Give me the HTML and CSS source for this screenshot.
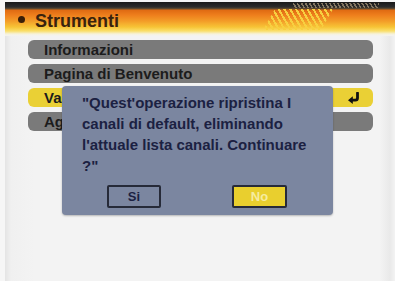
FILE: index.html
```html
<!DOCTYPE html>
<html lang="it">
<head>
<meta charset="utf-8">
<title>Strumenti</title>
<link rel="stylesheet" href="styles.css">
</head>
<body>
<div class="frame">
  <header class="header">
    <span class="dot"></span>
    <h1 class="title">Strumenti</h1>
    <span class="hatch-dark"></span>
    <span class="hatch-yellow"></span>
  </header>
  <ul class="menu">
    <li class="row">Informazioni</li>
    <li class="row">Pagina di Benvenuto</li>
    <li class="row row-active"><span class="row-label">Va</span>
      <svg class="enter" width="14" height="12" viewBox="0 0 14 12" aria-hidden="true">
        <path d="M10.5 1 V6 Q10.5 8.2 8.3 8.2 H5" fill="none" stroke="#111" stroke-width="2.8" stroke-linecap="round"/>
        <polygon points="1,8.2 5.8,4.2 5.8,12" fill="#111"/>
      </svg>
    </li>
    <li class="row"><span class="row-label">Ag</span></li>
  </ul>
  <div class="dialog">
    <p class="message">"Quest'operazione ripristina I<br>canali di default, eliminando<br>l'attuale lista canali. Continuare<br>?"</p>
    <div class="buttons">
      <button class="btn">Si</button>
      <button class="btn btn-active">No</button>
    </div>
  </div>
</div>
</body>
</html>
```

FILE: styles.css
```css
* { box-sizing: border-box; }

html, body {
  margin: 0;
  padding: 0;
  width: 395px;
  height: 281px;
  overflow: hidden;
  background: #f6f6f6;
}

.frame {
  position: relative;
  margin-left: 5px;
  height: 281px;
  background: linear-gradient(to right, #e4e4e4 0, #f0f0f0 6px, #f3f3f3 30px, #f3f3f3 375px, #e9e9e9 385px, #f3f3f3 390px);
  font-family: "Liberation Sans", Arial, sans-serif;
}

.header {
  position: relative;
  display: flex;
  align-items: center;
  margin-top: 2px;
  height: 34px;
  padding-left: 13px;
  padding-top: 3px;
  background: linear-gradient(to bottom,
    #1a1a1a 0, #2c2c2c 5px, #6a5030 7px, #df6a12 8px, #ee7e1c 13px,
    #f39c28 19px, #f7c436 25px, #fadf6a 29px, #f6f2dc 32px, #f3f3f3 34px);
}

.dot {
  width: 7px;
  height: 7px;
  border-radius: 50%;
  background: #3a1e08;
  margin-right: 10px;
  margin-top: -3px;
}

.title {
  margin: 0;
  font-size: 18px;
  line-height: 22px;
  font-weight: bold;
  color: #3a230e;
}

.hatch-dark {
  position: absolute;
  left: 288px;
  top: 1px;
  width: 86px;
  height: 5px;
  background: repeating-linear-gradient(60deg, transparent 0, transparent 2px, #9a8a70 2px, #9a8a70 3.5px);
  opacity: 0.8;
}

.hatch-yellow {
  position: absolute;
  left: 258px;
  top: 7px;
  width: 70px;
  height: 21px;
  clip-path: polygon(12px 0, 100% 0, calc(100% - 12px) 100%, 0 100%);
  background: repeating-linear-gradient(60deg, transparent 0, transparent 3px, #f7d040 3px, #f7d040 5px);
}

.menu {
  list-style: none;
  margin: 4px 0 0 23px;
  padding: 0;
  width: 345px;
  display: flex;
  flex-direction: column;
  gap: 5px;
}

.row {
  display: flex;
  align-items: center;
  height: 19px;
  padding-left: 16px;
  border-radius: 6px;
  background: #7a7a7a;
  font-size: 15px;
  font-weight: bold;
  color: #1c1c1c;
  white-space: nowrap;
}

.row-label { display: block; }

.row-active {
  background: #ead035;
  justify-content: space-between;
  padding-right: 12px;
}

.enter { display: block; }

.dialog {
  position: absolute;
  left: 57px;
  top: 84px;
  width: 271px;
  height: 129px;
  padding: 6px 0 0 20px;
  border-radius: 4px;
  background: #7b86a0;
  box-shadow: 0 1px 2px rgba(0, 0, 0, 0.25);
}

.message {
  margin: 0;
  font-size: 15px;
  line-height: 21px;
  font-weight: bold;
  color: #1b2142;
  white-space: nowrap;
}

.buttons {
  display: flex;
  gap: 71px;
  margin-top: 9px;
  padding-left: 25px;
}

.btn {
  width: 54px;
  height: 23px;
  padding: 0;
  border: 2px solid #262a38;
  border-radius: 2px;
  background: #7b86a0;
  font-family: "Liberation Sans", Arial, sans-serif;
  font-size: 13px;
  font-weight: bold;
  color: #1b2142;
}

.btn-active {
  width: 55px;
  background: #e9cf2e;
  color: #f6eca0;
}
```
